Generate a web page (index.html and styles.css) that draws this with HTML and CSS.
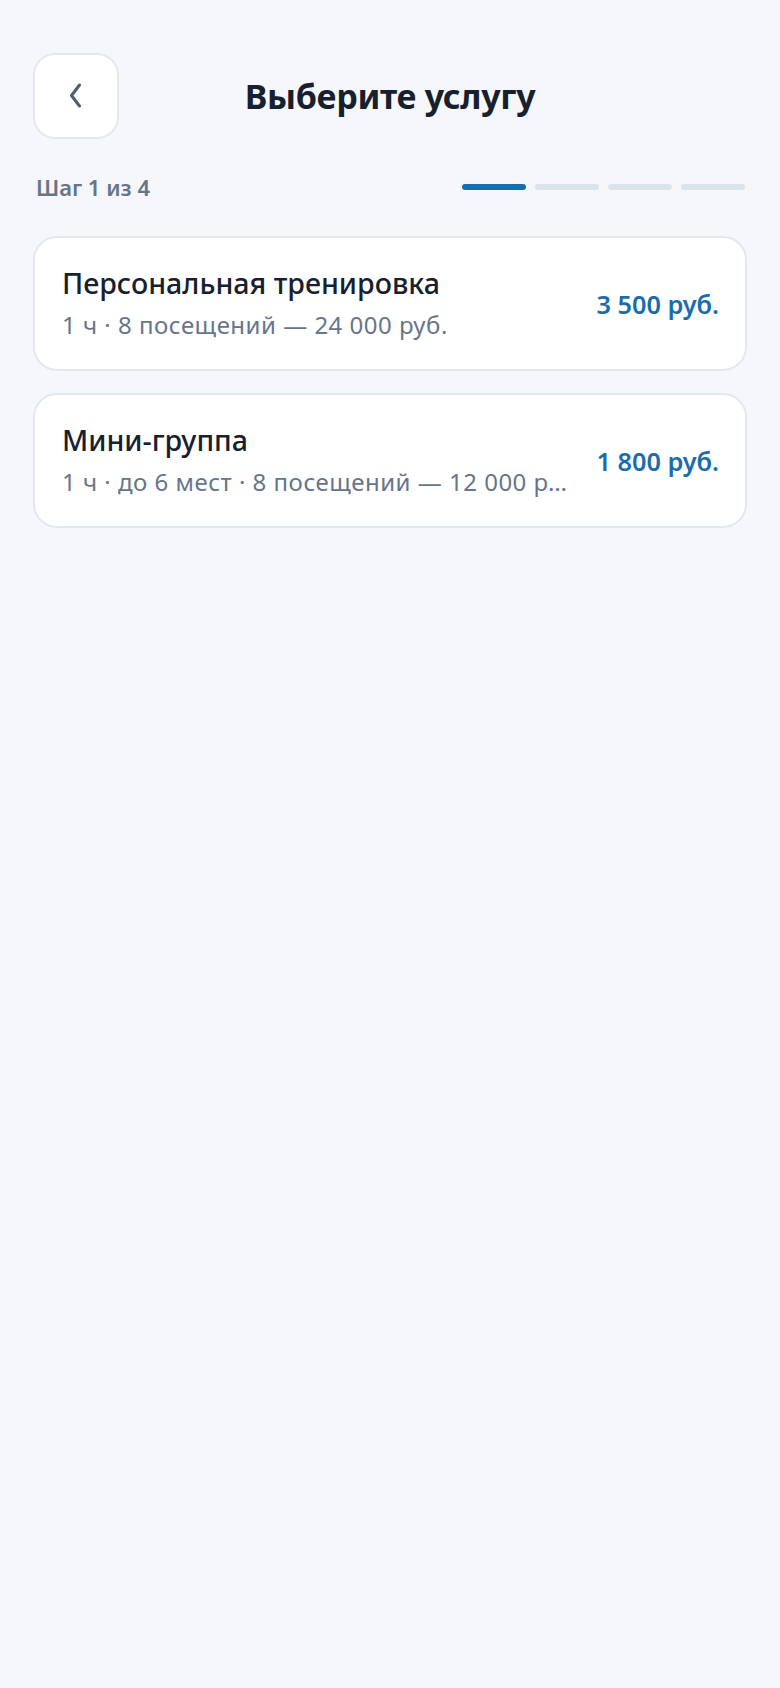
FILE: index.html
```html
<!DOCTYPE html>
<html lang="ru">
<head>
<meta charset="utf-8">
<title>Выберите услугу</title>
<link rel="stylesheet" href="styles.css">
</head>
<body>
<div class="page">
  <header class="header">
    <button class="back" aria-label="Назад">
      <svg width="16" height="26" viewBox="0 0 16 26" fill="none"><path d="M11.5 2 L3.5 12.5 L11.5 23" stroke="#4f5d72" stroke-width="3" stroke-linecap="round" stroke-linejoin="round"/></svg>
    </button>
    <h1 class="title">Выберите услугу</h1>
    <div class="spacer"></div>
  </header>
  <div class="steps">
    <span class="step-label">Шаг 1 из 4</span>
    <div class="bars">
      <span class="bar active"></span>
      <span class="bar"></span>
      <span class="bar"></span>
      <span class="bar"></span>
    </div>
  </div>
  <div class="list">
    <div class="card">
      <div class="info">
        <div class="name">Персональная тренировка</div>
        <div class="meta">1 ч · 8 посещений — 24 000 руб.</div>
      </div>
      <div class="price">3 500 руб.</div>
    </div>
    <div class="card">
      <div class="info">
        <div class="name">Мини-группа</div>
        <div class="meta">1 ч · до 6 мест · 8 посещений — 12 000 руб.</div>
      </div>
      <div class="price">1 800 руб.</div>
    </div>
  </div>
</div>
</body>
</html>
```
FILE: styles.css
```css
html, body {
  margin: 0;
  background: #f5f7fb;
  font-family: "Noto Sans", "Open Sans", sans-serif;
  color: #17202e;
}
.page {
  padding: 53px 33px 0;
}
.header {
  display: flex;
  align-items: center;
  height: 86px;
}
.back {
  width: 86px;
  height: 86px;
  flex: 0 0 86px;
  box-sizing: border-box;
  border: 2px solid #e3e8f0;
  border-radius: 22px;
  background: #ffffff;
  display: flex;
  align-items: center;
  justify-content: center;
  padding: 0;
}
.title {
  flex: 1;
  margin: 0;
  text-align: center;
  font-size: 34px;
  font-weight: 700;
  color: #17202e;
  letter-spacing: -0.3px;
}
.spacer {
  width: 86px;
  flex: 0 0 86px;
}
.steps {
  display: flex;
  align-items: center;
  justify-content: space-between;
  margin-top: 33px;
  padding-left: 3px;
  padding-right: 2px;
}
.step-label {
  font-size: 22px;
  font-weight: 600;
  color: #67758a;
}
.bars {
  display: flex;
  gap: 9px;
}
.bar {
  width: 64px;
  height: 6px;
  border-radius: 3px;
  background: #dde3ea;
}
.bar.active {
  background: #1a6dac;
}
.list {
  display: flex;
  flex-direction: column;
  gap: 22px;
  margin-top: 34px;
}
.card {
  display: flex;
  align-items: center;
  gap: 22px;
  background: #ffffff;
  border: 2px solid #e3e8f0;
  border-radius: 24px;
  padding: 0 26px 0 27px;
  height: 135px;
  box-sizing: border-box;
}
.info {
  flex: 1;
  min-width: 0;
}
.name {
  font-size: 28.6px;
  font-weight: 500;
  color: #17202e;
  line-height: 40px;
  margin-top: -2px;
}
.meta {
  font-size: 24px;
  letter-spacing: 0.5px;
  color: #67758a;
  line-height: 36px;
  margin-top: 4px;
  white-space: nowrap;
  overflow: hidden;
  text-overflow: ellipsis;
}
.price {
  font-size: 25.3px;
  font-weight: 600;
  color: #1a6dac;
  white-space: nowrap;
}
```
